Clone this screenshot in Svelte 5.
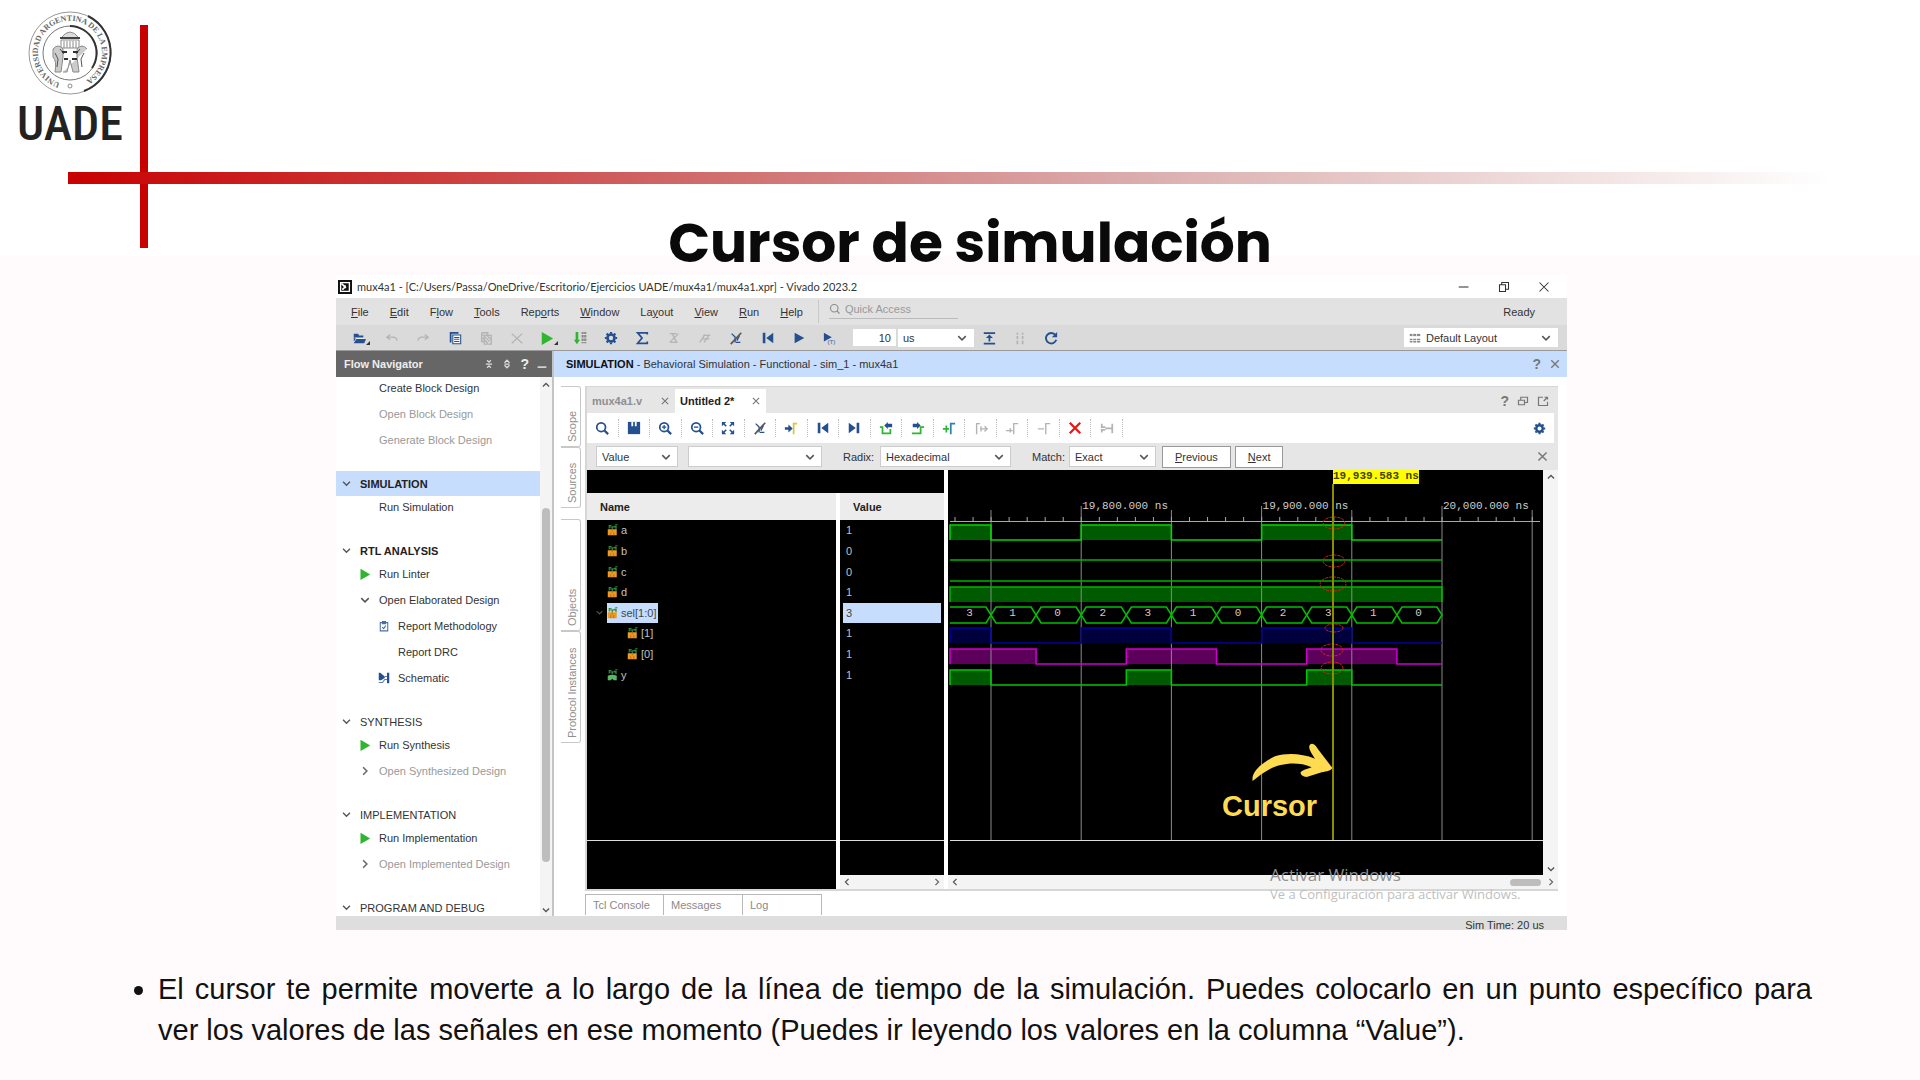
<script>
  // ── Icons, all on a 16×16 grid ────────────────────────────────────────────

  const NAVY = '#24508f';
  const GREY = '#b4b4b4';
  const GREEN = '#2fb52f';

  const line = (d, c = NAVY, w = 2) => `<path d="${d}" fill="none" stroke="${c}" stroke-width="${w}"/>`;
  const fill = (d, c = NAVY) => `<path d="${d}" fill="${c}"/>`;

  const gear =
    `<circle cx="8" cy="8" r="4" fill="none" stroke="${NAVY}" stroke-width="3"/>` +
    line('M8 1v2M8 13v2M1 8h2M13 8h2M3 3l1.500 1.500M11.500 11.500L13 13M13 3l-1.500 1.500M4.500 11.500L3 13', NAVY, 2.5);
  const lens = '<circle cx="7" cy="7" r="5" fill="none" stroke="#24508f" stroke-width="2"/>' + line('M10.500 10.500L15 15', NAVY, 2.5);

  const icons = {
    open: fill('M2 3h5l1 2h5v3H5l-3 4z') + fill('M5 9h11l-2 5H2z') + line('M3 8h11', '#fff', 1),
    undo: line('M2 7h7q4 0 5 4M6 4L2 7l4 3', GREY, 1.5),
    redo: line('M14 7H7q-4 0-5 4M10 4l4 3-4 3', GREY, 1.5),
    copy: line('M3 13V2h9', NAVY, 2) + '<path d="M5.500 4.500h9v10h-9z" fill="#fff"/>' + line('M5.500 4.500h9v10h-9zM7 7.500h6M7 9.500h6M7 12h6', NAVY, 1.2),
    paste: line('M3 2h7v4M3 2v10h3M6 5h8v10H6zM4 4l8 8M4 8l6 6M8 4l6 6', GREY, 1.5),
    cut: line('M2 3l12 11M14 3L2 14', GREY, 1.5),
    run: fill('M2 1l13 7.500L2 16z', GREEN),
    program: fill('M3 1h3v9h2l-3.500 5L1 10h2z', GREEN) + line('M11 1v13M14 1v13', '#8a8a8a', 2.5) + line('M9 4h7M9 8h7M9 12h7', '#e2e2e2', 1),
    gear,
    sum: line('M14 4V2H3l5 6-5 6h11v-2', NAVY, 2),
    dimA: line('M3 3h8M4 13h8M3 13L13 3M6 3l5 10', GREY, 1.5),
    dimB: line('M2 13L8 4M7 13l6-9M4 9h9M6 5h8', GREY, 1.5),
    slash: line('M3 3l4 4v6M13 13H8M12 5l-3 6', NAVY, 1.5) + line('M2 15L14 2', '#5a5a5a', 2),
    first: fill('M2 2h3v12H2z') + fill('M14 2v12L6 8z'),
    last: fill('M11 2h3v12h-3z') + fill('M2 2v12l8-6z'),
    play: fill('M3 2l11 6-11 6z'),
    playT: fill('M1 2l9 5-9 5z') + '<text x="5" y="15" font-size="7" font-weight="700" fill="#6d86b0">(T)</text>',
    restart: line('M2 2.500h13M2 14.500h13', NAVY, 2) + fill('M8.500 4l4 4h-8z') + fill('M7.500 7h2v5h-2z'),
    pauseDim: line('M5 2v13M11 2v13', GREY, 2) + line('M3 5h10M3 10h10', '#dadada', 1.5),
    relaunch: line('M13 4.500A6 6 0 1 0 14 10', NAVY, 2.2) + fill('M15 1v6H9z'),
    search: lens,
    quick: '<circle cx="7" cy="7" r="5" fill="none" stroke="#8a8a8a" stroke-width="1.500"/>' + line('M10.500 10.500L14 14', '#8a8a8a', 1.5),
    save: fill('M1 1h14v14H1z') + fill('M5 1h2v5H5zM9 1h2v5H9z', '#fff'),
    zoomIn: lens + line('M4.500 7h5M7 4.500v5', NAVY, 1.5),
    zoomOut: lens + line('M4.500 7h5', NAVY, 1.5),
    fit: line('M6 6L2 2M10 6l4-4M6 10l-4 4M10 10l4 4', NAVY, 1.8) + fill('M1 1h5L1 6zM15 1h-5l5 5zM1 15h5l-5-5zM15 15h-5l5-5z'),
    toCursor: fill('M1 7h4V4l5 4.500L5 13v-3H1z') + line('M11 15V3h4', '#e2c23c', 2),
    prevEdge: line('M1 7h3v7h9V9', GREEN, 2) + fill('M6 5l4-4v2h5v4h-5v2z'),
    nextEdge: line('M1 14h10V7h4', GREEN, 2) + fill('M11 5L7 1v2H2v4h5v2z'),
    addMarker: line('M1 9h7M5 5v8', GREEN, 2) + line('M10 15V3h5', '#2f7fae', 2),
    swapDim: line('M7 3H3v12M7 9h8M12 6l3 3-3 3M8 6v6', GREY, 1.6),
    prevDim: line('M1 11h8M6 8v5M10 15V3h5', GREY, 1.6),
    removeDim: line('M1 9h7M10 15V3h5', GREY, 1.6),
    remove: line('M2 2l12 12M14 2L2 14', '#ee1111', 2.5),
    fitDim: line('M2 3v4h4M2 13v-3h4M14 3v11M6 8.500h8', GREY, 2),
    layout: line('M1 4h14', '#8a8a8a', 3) + line('M1 10h14M1 13h14', '#8a8a8a', 2) + line('M5 1v15M10 1v15', '#fff', 1),
    down: line('M3 5.500l5 5 5-5', '#555', 2),
    right: line('M5.500 3l5 5-5 5', '#666', 2),
    left: line('M10.500 3l-5 5 5 5', '#555', 2),
    up: line('M3 10.500l5-5 5 5', '#555', 2),
    close: line('M3 3l10 10M13 3L3 13', '#777', 1.8),
    dash: line('M1 8h13', '#333', 1.4),
    restore: line('M2 5h8v9H2zM5 5V2h9v9h-4', '#333', 1.4),
    quit: line('M2 2l12 12M14 2L2 14', '#333', 1.4),
    float: line('M2 7h8v6H2zM5 7V3h9v7h-4', '#777', 1.6),
    maximize: line('M8 3H2v11h12V9M9 8l5-5M10 3h4v3', '#777', 1.6),
    collapse: line('M3 8h10M5 2l3 3 3-3M5 14l3-3 3 3', '#ddd', 2),
    expand: line('M4 6l4-4 4 4M4 10l4 4 4-4M4 8h8', '#ddd', 2),
    minimize: line('M1 13h14', '#ddd', 2.5),
    clipboard: line('M3 3.500h10v11H3zM6 2h4v3H6zM5.500 9.500l2 2 3-4', '#4a6fa5', 1.4),
    schematic: fill('M1 1h2l6 5v2l-5 3H1z') + fill('M12 1h3v14h-3z') + line('M1 14h5l3-4h3M9 6h3', '#5d7db0', 1.5),
    logo: '<rect width="16" height="16" fill="#111"/>' + line('M3 3h10v10H3z', '#fff', 1.5) + line('M4 4l5 5M5 11l3-3v-2', '#fff', 2),
    busIn: line('M3 6V2h3M7 7V3M9 3h3v4M11 1h3M4 4h9', '#2e8b3d', 1.6) + fill('M1 7h12v8H1z', '#ee9a22') + line('M5 11v4M9 11v4M7 7v3', '#a8670f', 1),
    busOut: line('M3 6V2h3M7 7V3M9 3h3v4M11 1h3M4 4h9', '#2e8b3d', 1.6) + fill('M1 9q6-3 12 0v6H9l-2-2-2 2H1z', '#5bb768')
  };

  // ── Window chrome ─────────────────────────────────────────────────────────

  const menus = [
    ['', 'F', 'ile'], ['', 'E', 'dit'], ['F', 'l', 'ow'], ['', 'T', 'ools'], ['Rep', 'o', 'rts'],
    ['', 'W', 'indow'], ['La', 'y', 'out'], ['', 'V', 'iew'], ['', 'R', 'un'], ['', 'H', 'elp']
  ];

  const mainTools = ['open', 'undo', 'redo', 'copy', 'paste', 'cut', 'run', 'program', 'gear', 'sum',
    'dimA', 'dimB', 'slash', 'first', 'play', 'playT'];

  const waveTools = ['search', 'save', 'zoomIn', 'zoomOut', 'fit', 'slash', 'toCursor', 'first', 'last',
    'prevEdge', 'nextEdge', 'addMarker', 'swapDim', 'prevDim', 'removeDim', 'remove', 'fitDim'];

  const flow = [
    { items: [
      { label: 'Create Block Design' },
      { label: 'Open Block Design', dim: true },
      { label: 'Generate Block Design', dim: true }
    ] },
    { title: 'SIMULATION', bold: true, active: true, items: [{ label: 'Run Simulation' }] },
    { title: 'RTL ANALYSIS', bold: true, items: [
      { label: 'Run Linter', icon: 'run' },
      { label: 'Open Elaborated Design', icon: 'down' },
      { label: 'Report Methodology', icon: 'clipboard', nested: true },
      { label: 'Report DRC', nested: true },
      { label: 'Schematic', icon: 'schematic', nested: true }
    ] },
    { title: 'SYNTHESIS', items: [
      { label: 'Run Synthesis', icon: 'run' },
      { label: 'Open Synthesized Design', icon: 'right', dim: true }
    ] },
    { title: 'IMPLEMENTATION', items: [
      { label: 'Run Implementation', icon: 'run' },
      { label: 'Open Implemented Design', icon: 'right', dim: true }
    ] },
    { title: 'PROGRAM AND DEBUG', items: [] }
  ];

  const sideTabs = [
    { label: 'Scope', size: 'short' },
    { label: 'Sources', size: 'short' },
    { label: 'Objects', size: 'long', apart: true },
    { label: 'Protocol Instances', size: 'long' }
  ];

  const signals = [
    { name: 'a', value: '1' },
    { name: 'b', value: '0' },
    { name: 'c', value: '0' },
    { name: 'd', value: '1' },
    { name: 'sel[1:0]', value: '3', selected: true },
    { name: '[1]', value: '1', nested: true },
    { name: '[0]', value: '1', nested: true },
    { name: 'y', value: '1', out: true }
  ];

  // ── Waveform ──────────────────────────────────────────────────────────────

  // One step is 25 ns; step 0 sits on the first grid line.
  const START = 2;
  const at = (n) => Math.max(START, 43 + n * 45.1);
  const END = at(10);

  const gridLines = [0, 2, 4, 6, 8, 10, 12];
  const ticks = Array.from({ length: 33 }, (_, i) => 7 + i * 18.04);
  const rulerLabels = [
    { n: 2, text: '19,800.000 ns' },
    { n: 6, text: '19,900.000 ns' },
    { n: 10, text: '20,000.000 ns' }
  ];

  const waves = [
    { top: 55, low: 70, color: '#00d800', shade: '#005a00', high: [[-1, 0], [2, 4], [6, 8]] },
    { top: 75, low: 90, color: '#00b400', shade: '#005a00', high: [] },
    { top: 96, low: 111, color: '#00b400', shade: '#005a00', high: [] },
    { top: 117, low: 132, color: '#00b400', shade: '#005a00', high: [[-1, 10]] },
    { top: 158, low: 173, color: '#0000a0', shade: '#00003c', high: [[-1, 0], [2, 4], [6, 8]] },
    { top: 179, low: 194, color: '#d000d0', shade: '#5c005c', high: [[-1, 1], [3, 5], [7, 9]] },
    { top: 200, low: 215, color: '#00c800', shade: '#005a00', high: [[-1, 0], [3, 4], [7, 8]] }
  ];

  function trace(w) {
    let d = `M${START} ${w.low}`;
    for (const [from, to] of w.high) {
      d += `H${at(from)}V${w.top}H${at(to)}V${w.low}`;
    }
    return d + `H${END}`;
  }

  const bus = ['3', '1', '0', '2', '3', '1', '0', '2', '3', '1', '0'].map((value, i) => ({
    value,
    from: at(i - 1),
    to: at(i)
  }));

  function cell({ from, to }) {
    const left = from === START ? `M${from} 137` : `M${from} 145L${from + 5} 137`;
    const back = from === START ? `H${from}` : `H${from + 5}L${from} 145`;
    return `${left}H${to - 5}L${to} 145L${to - 5} 153${back}`;
  }

  const CURSOR = 385;
  const rings = [
    [386, 53, 11, 6], [386, 91, 11, 6], [385, 114, 13, 7],
    [386, 158, 9, 4], [384, 180, 11, 6], [384, 198, 11, 6]
  ];
</script>

{#snippet icon(name, size = 14)}
  <svg class="icon" width={size} height={size} viewBox="0 0 16 16" aria-hidden="true">{@html icons[name]}</svg>
{/snippet}

{#snippet pick(label, value, kind)}
  <span class="pick {kind}">
    <select aria-label={label}><option>{value}</option></select>
    <span class="pick-arrow">{@render icon('down', 12)}</span>
  </span>
{/snippet}

<header class="banner">
  <div class="brand">
    <svg width="92" height="92" viewBox="0 0 92 92" role="img" aria-label="Sello UADE">
      <defs>
        <path id="seal-ring" d="M36 76A32 32 0 1 1 56 76" />
      </defs>
      <circle cx="46" cy="46" r="41" fill="none" stroke="#999" stroke-width="1" />
      <path d="M64 9A41 41 0 0 1 60 84" fill="none" stroke="#333" stroke-width="2" />
      <circle cx="46" cy="46" r="27" fill="none" stroke="#777" stroke-width="1" />
      <path d="M46 19A27 27 0 0 1 68 61" fill="none" stroke="#333" stroke-width="2" />
      <text class="seal-text"><textPath href="#seal-ring">UNIVERSIDAD ARGENTINA DE LA EMPRESA</textPath></text>
      <g fill="none" stroke="#8a8a8a" stroke-width="1">
        <path d="M37 31q9-12 18 0z" fill="#ddd" />
        <path d="M36 31h20" stroke="#444" stroke-width="2" />
        <path d="M37 33h18v8H37zM40 34v7M43 34v7M46 34v7M49 34v7M52 34v7" />
        <path d="M29 42q5-6 10 0v8l-2 15h-6q2-11-2-15z" fill="#ccc" />
        <path d="M63 42q-5-6-10 0v8l2 15h-6l-3-12-3 12h-4" fill="#ccc" />
        <path d="M31 46l3 6-1 8M60 46l-3 6 1 8M36 42l4 5M56 42l-4 5" stroke="#555" />
        <path d="M38 45h5M49 45h5M40 52h4M48 52h5" stroke="#333" stroke-width="2" />
        <circle cx="46" cy="79" r="2" />
      </g>
    </svg>
    <span class="brand-name">UADE</span>
  </div>
  <div class="rule-v"></div>
  <div class="rule-h"></div>
  <h1>Cursor de simulación</h1>
</header>

<main>
  <section class="app-window">
    <div class="titlebar">
      {@render icon('logo')}
      <span class="title">mux4a1 - [C:/Users/Passa/OneDrive/Escritorio/Ejercicios UADE/mux4a1/mux4a1.xpr] - Vivado 2023.2</span>
      <div class="window-buttons">
        <button aria-label="Minimizar">{@render icon('dash', 12)}</button>
        <button aria-label="Restaurar">{@render icon('restore', 12)}</button>
        <button aria-label="Cerrar">{@render icon('quit', 12)}</button>
      </div>
    </div>

    <nav class="menubar">
      {#each menus as [before, key, after]}
        <button>{before}<u>{key}</u>{after}</button>
      {/each}
      <div class="quick-box">
        <label class="quick">
          {@render icon('quick', 12)}
          <input type="text" placeholder="Quick Access" />
        </label>
      </div>
      <span class="ready">Ready</span>
    </nav>

    <div class="toolbar">
      <div class="main-tools">
        {#each mainTools as name}
          <button aria-label={name} class:corner={name === 'open' || name === 'run'}>{@render icon(name)}</button>
        {/each}
      </div>
      <input class="run-time" type="text" value="10" aria-label="Run time" />
      {@render pick('Time unit', 'us', 'unit')}
      <div class="run-tools">
        <button aria-label="Restart">{@render icon('restart')}</button>
        <button aria-label="Break">{@render icon('pauseDim')}</button>
        <button aria-label="Relaunch">{@render icon('relaunch')}</button>
      </div>
      <div class="layout-pick">
        {@render icon('layout', 12)}
        {@render pick('Layout', 'Default Layout', 'layout')}
      </div>
    </div>

    <div class="body">
      <aside class="navigator">
        <div class="nav-head">
          <span>Flow Navigator</span>
          {@render icon('collapse', 10)}
          {@render icon('expand', 10)}
          <b>?</b>
          {@render icon('minimize', 10)}
        </div>
        <div class="nav-body">
          <div class="nav-list">
            {#each flow as group}
              <div class="group">
                {#if group.title}
                  <div class="group-title" class:bold={group.bold} class:active={group.active}>
                    {@render icon('down', 11)}{group.title}
                  </div>
                {/if}
                <ul>
                  {#each group.items as item}
                    <li class:dim={item.dim} class:nested={item.nested}>
                      <span class="slot">{#if item.icon}{@render icon(item.icon, 12)}{/if}</span>{item.label}
                    </li>
                  {/each}
                </ul>
              </div>
            {/each}
          </div>
          <div class="vscroll">
            {@render icon('up', 10)}
            <span class="nav-thumb"></span>
            {@render icon('down', 10)}
          </div>
        </div>
      </aside>

      <section class="simulation">
        <div class="sim-head">
          <span><b>SIMULATION</b> - Behavioral Simulation - Functional - sim_1 - mux4a1</span>
          <span class="head-icons"><b>?</b>{@render icon('close', 12)}</span>
        </div>

        <div class="sim-body">
          <div class="side-tabs">
            {#each sideTabs as tab}
              <button class={tab.size} class:apart={tab.apart}>{tab.label}</button>
            {/each}
          </div>

          <div class="work">
            <div class="panel">
              <div class="tabs">
                <button class="tab">mux4a1.v {@render icon('close', 10)}</button>
                <button class="tab current">Untitled 2* {@render icon('close', 10)}</button>
                <span class="tab-icons"><b>?</b>{@render icon('float', 12)}{@render icon('maximize', 12)}</span>
              </div>

              <div class="wave-bar">
                <div class="wave-tools">
                  {#each waveTools as name}
                    <button aria-label={name}>{@render icon(name)}</button>
                  {/each}
                </div>
                <button class="settings" aria-label="Settings">{@render icon('gear', 13)}</button>
              </div>

              <div class="find">
                {@render pick('Find by', 'Value', 'by')}
                {@render pick('Find text', '', 'text')}
                <span class="find-label radix">Radix:</span>
                {@render pick('Radix', 'Hexadecimal', 'base')}
                <span class="find-label match">Match:</span>
                {@render pick('Match', 'Exact', 'exact')}
                <button class="push"><u>P</u>revious</button>
                <button class="push"><u>N</u>ext</button>
                <button class="find-close" aria-label="Close">{@render icon('close', 13)}</button>
              </div>

              <div class="content">
                <div class="signals">
                  <div class="signals-top"></div>
                  <table>
                    <thead>
                      <tr><th class="name">Name</th><th>Value</th></tr>
                    </thead>
                    <tbody>
                      {#each signals as s}
                        <tr class:selected={s.selected}>
                          <td class="name" class:nested={s.nested}>
                            <div class="signal">
                              <span class="twist">{#if s.selected}{@render icon('down', 9)}{/if}</span>
                              <span class="tag">{@render icon(s.out ? 'busOut' : 'busIn', 12)}{s.name}</span>
                            </div>
                          </td>
                          <td class="value"><span>{s.value}</span></td>
                        </tr>
                      {/each}
                    </tbody>
                  </table>
                  <div class="below">
                    <div class="below-name"><div class="fill"></div></div>
                    <div class="below-value">
                      <div class="fill"></div>
                      <div class="hscroll">{@render icon('left', 10)}{@render icon('right', 10)}</div>
                    </div>
                  </div>
                </div>

                <div class="wave">
                  <div class="wave-main">
                    <svg class="canvas" height="405">
                      {#each waves as w}
                        {#each w.high as [from, to]}
                          <rect x={at(from)} y={w.top} width={at(to) - at(from)} height={w.low - w.top} fill={w.shade} />
                        {/each}
                      {/each}
                      {#each gridLines as n}
                        <path class="grid" d="M{at(n)} {n % 4 === 2 ? 36 : 40}V370" />
                      {/each}
                      <path class="ruler" d="M2 51.500H592" />
                      {#each ticks as x}
                        <path class="ruler" d="M{x} 47V51" />
                      {/each}
                      {#each rulerLabels as l}
                        <text class="mono" x={at(l.n) + 1} y="39">{l.text}</text>
                      {/each}
                      {#each waves as w}
                        <path d={trace(w)} fill="none" stroke={w.color} stroke-width="1.500" />
                      {/each}
                      {#each bus as b}
                        <path d={cell(b)} fill="none" stroke="#00c000" stroke-width="1.500" />
                        <text class="mono" x={(b.from + b.to) / 2 - 1} y="146" text-anchor="middle">{b.value}</text>
                      {/each}
                      {#each rings as [cx, cy, rx, ry]}
                        <ellipse class="ring" {cx} {cy} {rx} {ry} />
                      {/each}
                      <path class="cursor" d="M{CURSOR} 14V370" />
                      <rect x={CURSOR} y="0" width="86" height="14" fill="#ff0" />
                      <text class="mono stamp" x={CURSOR} y="9">19,939.583 ns</text>
                      <rect x="2" y="370" width="100%" height="1" fill="#ddd" />
                      <path
                        class="arrow"
                        transform="translate(232 230) scale(.3333)"
                        d="M218 243C212 215 250 185 285 169C320 158 365 160 405 176C395 160 386 148 388 138C391 128 402 130 408 139C420 156 440 182 457 203C455 212 440 213 425 217L380 231C368 230 361 224 362 217C370 208 385 207 395 202C350 182 300 192 270 207C250 217 235 230 218 243Z"
                      />
                      <text class="callout" x="274" y="346">Cursor</text>
                    </svg>
                    <div class="hscroll">{@render icon('left', 10)}<span class="wave-thumb"></span></div>
                  </div>
                  <div class="wave-scroll">
                    {@render icon('up', 10)}
                    <span class="corner-arrows">{@render icon('down', 10)}{@render icon('right', 10)}</span>
                  </div>
                </div>
              </div>
            </div>

            <div class="bottom-tabs">
              <button>Tcl Console</button>
              <button>Messages</button>
              <button>Log</button>
            </div>
          </div>
        </div>
      </section>
    </div>

    <footer class="status">Sim Time: 20 us</footer>

    <div class="watermark">
      <p class="activate">Activar Windows</p>
      <p>Ve a Configuración para activar Windows.</p>
    </div>
  </section>

  <ul class="notes">
    <li>El cursor te permite moverte a lo largo de la línea de tiempo de la simulación. Puedes colocarlo en un punto específico para ver&nbsp;los valores de las señales en ese momento (Puedes ir leyendo los valores en la columna “Value”).</li>
  </ul>
</main>

<style>
  :global(body) {
    margin: 0;
    background: linear-gradient(#fff, #fff) no-repeat top / 100% 256px #fffbfc;
    font-family: "Liberation Sans", Arial, sans-serif;
  }

  button, input, select {
    font: inherit;
    color: inherit;
    background: none;
    border: none;
    padding: 0;
    margin: 0;
    box-sizing: border-box;
  }

  .icon {
    display: block;
    flex-shrink: 0;
  }

  /* ── Banner ──────────────────────────────────────────────────────── */

  .banner {
    display: grid;
    grid-template-columns: 68px 72px 8px 1fr 90px;
    grid-template-rows: 25px 147px 12px 64px 27px;
  }

  .brand {
    grid-area: 1 / 1 / 3 / 3;
    display: flex;
    flex-direction: column;
    align-items: center;
    padding-top: 7px;
  }

  .brand-name {
    font: 500 48px/50px "Roboto Condensed", "Open Sans Condensed", "DejaVu Sans Condensed", sans-serif;
    color: #222;
  }

  .seal-text {
    font: 700 8px "Liberation Serif", serif;
    fill: #666;
  }

  .rule-v {
    grid-area: 2 / 3 / 5 / 4;
    background: #c80000;
  }

  .rule-h {
    grid-area: 3 / 2 / 4 / 5;
    background: linear-gradient(90deg, #c80000, #cd3a3a 20%, #d06c6c 36%, #dcb0b0 62%, #fff);
  }

  h1 {
    grid-area: 4 / 1 / 6 / -1;
    align-self: end;
    margin: 0;
    padding-left: 20px;
    text-align: center;
    font: 700 55px/64px Poppins, Inter, sans-serif;
    color: #0a0a0a;
  }

  /* ── Application window ──────────────────────────────────────────── */

  .app-window {
    position: relative;
    margin: 0 353px 0 336px;
    background: #fff;
    font-size: 11px;
    line-height: 14px;
    color: #333;
    white-space: nowrap;
  }

  .titlebar {
    display: flex;
    align-items: center;
    gap: 5px;
    height: 23px;
    padding: 0 17px 0 2px;
  }

  .title {
    font-family: Lato, "Noto Sans", sans-serif;
  }

  .window-buttons {
    display: flex;
    gap: 28px;
    margin-left: auto;
  }

  .menubar {
    display: flex;
    align-items: center;
    gap: 21px;
    height: 27px;
    padding: 0 32px 0 15px;
    background: #e2e2e2;
  }

  .quick-box {
    padding: 0 0 4px 10px;
    margin-left: -6px;
    border-left: 1px solid #c8c8c8;
  }

  .quick {
    display: flex;
    align-items: center;
    gap: 4px;
    width: 129px;
    height: 18px;
    border-bottom: 1px solid #bbb;
    color: #999;
  }

  .quick input {
    flex: 1;
    min-width: 0;
  }

  .quick input::placeholder {
    color: #999;
  }

  .ready {
    margin-left: auto;
  }

  .toolbar {
    display: flex;
    align-items: center;
    height: 26px;
    padding: 0 9px;
    background: #dadada;
    border-bottom: 1px solid #999;
    box-sizing: border-box;
  }

  .main-tools {
    display: grid;
    grid-template-columns: repeat(16, 1fr);
    width: 501px;
    margin-right: 7px;
  }

  .main-tools button,
  .wave-tools button {
    display: flex;
    justify-content: center;
    align-items: center;
  }

  .main-tools .corner::after {
    content: '';
    align-self: end;
    width: 0;
    border: 2px solid transparent;
    border-right-color: #333;
    border-bottom-color: #333;
  }

  .run-time {
    width: 43px;
    height: 17px;
    padding-right: 5px;
    text-align: right;
    background: #fff;
  }

  .run-tools {
    display: flex;
    gap: 17px;
    margin-left: 8px;
  }

  .layout-pick {
    display: flex;
    align-items: center;
    height: 19px;
    margin-left: auto;
    padding-left: 5px;
    background: #fff;
  }

  .pick {
    position: relative;
    display: inline-flex;
  }

  .pick select {
    appearance: none;
    width: 100%;
    height: 21px;
    padding-left: 5px;
    background: #fff;
    border: 1px solid #ccc;
  }

  .pick-arrow {
    position: absolute;
    right: 6px;
    top: 5px;
    pointer-events: none;
  }

  .unit { width: 76px; margin-left: 2px; }
  .layout { width: 137px; }
  .by { width: 82px; }
  .text { width: 134px; margin-left: 10px; }
  .base { width: 131px; }
  .exact { width: 87px; margin-right: 6px; }

  .unit select,
  .layout select {
    height: 18px;
    border: none;
  }

  .unit .pick-arrow,
  .layout .pick-arrow {
    top: 3px;
  }

  /* ── Flow navigator ──────────────────────────────────────────────── */

  .body {
    display: flex;
    height: 565px;
  }

  .navigator {
    display: flex;
    flex-direction: column;
    width: 216px;
    border-right: 2px solid #c4c4c4;
  }

  .nav-head {
    display: flex;
    align-items: center;
    gap: 8px;
    height: 26px;
    padding: 0 5px 0 8px;
    background: #666;
    color: #eee;
    font-weight: 700;
  }

  .nav-head span {
    margin-right: auto;
  }

  .nav-head b {
    font-size: 14px;
  }

  .nav-body {
    display: flex;
    flex: 1;
    min-height: 0;
  }

  .nav-list {
    flex: 1;
    overflow: hidden;
  }

  .group {
    margin-bottom: 19px;
  }

  .group-title {
    display: flex;
    align-items: center;
    gap: 8px;
    height: 25px;
    padding-left: 5px;
  }

  .group-title.bold {
    font-weight: 700;
    color: #222;
  }

  .group-title.active {
    background: #c6ddfd;
  }

  .group ul {
    display: flex;
    flex-direction: column;
    gap: 3px;
    list-style: none;
    margin: 0;
    padding: 0;
  }

  .group li {
    display: flex;
    align-items: center;
    gap: 8px;
    height: 23px;
    padding: 0 0 1px 23px;
    box-sizing: border-box;
  }

  .group li.nested {
    padding-left: 42px;
  }

  .group li.dim {
    color: #999;
  }

  .slot {
    width: 12px;
  }

  .vscroll {
    display: flex;
    flex-direction: column;
    align-items: center;
    width: 12px;
    padding: 3px 0 1px;
    background: #f4f4f4;
    box-sizing: border-box;
  }

  .nav-thumb {
    width: 8px;
    height: 354px;
    margin: 118px 0 auto;
    border-radius: 4px;
    background: #bdbdbd;
  }

  /* ── Simulation area ─────────────────────────────────────────────── */

  .simulation {
    flex: 1;
    min-width: 0;
    display: flex;
    flex-direction: column;
  }

  .sim-head {
    display: flex;
    justify-content: space-between;
    align-items: center;
    height: 26px;
    padding: 0 6px 0 12px;
    background: #c6ddfd;
  }

  .sim-head > span:first-child b {
    color: #111;
  }

  .head-icons,
  .tab-icons {
    display: flex;
    align-items: center;
    gap: 8px;
    color: #777;
  }

  .head-icons b,
  .tab-icons b {
    font-size: 14px;
  }

  .sim-body {
    display: flex;
    flex: 1;
    padding: 9px 9px 0 7px;
  }

  .side-tabs {
    display: flex;
    flex-direction: column;
    width: 20px;
    margin-right: 4px;
  }

  .side-tabs button {
    writing-mode: vertical-rl;
    transform: rotate(180deg);
    width: 20px;
    padding: 4px 3px 4px 0;
    text-align: left;
    color: #8f8f8f;
    border: 1px solid #c8c8c8;
    border-right: none;
    border-radius: 3px 0 0 3px;
  }

  .side-tabs .short { height: 61px; }
  .side-tabs .long { height: 112px; }
  .side-tabs .apart { margin-top: 11px; }

  .work {
    flex: 1;
    min-width: 0;
  }

  .panel {
    border: solid #d6d6d6;
    border-width: 1px 0 2px 2px;
    background: #e6e6e6;
  }

  .tabs {
    display: flex;
    height: 26px;
    padding: 2px 9px 0 0;
    box-sizing: border-box;
  }

  .tab {
    display: flex;
    justify-content: space-between;
    align-items: center;
    width: 88px;
    padding: 0 5px;
    color: #8f8f8f;
    font-weight: 700;
  }

  .tab.current {
    width: 91px;
    background: #fff;
    color: #222;
  }

  .tab-icons {
    margin-left: auto;
  }

  .wave-bar {
    display: flex;
    align-items: center;
    justify-content: space-between;
    height: 30px;
    margin-right: 4px;
    padding-right: 8px;
    background: #fff;
  }

  .wave-tools {
    display: grid;
    grid-template-columns: repeat(17, 1fr);
    width: 536px;
  }

  .wave-tools button {
    height: 18px;
    border-right: 1px dotted #bbb;
  }

  .find {
    display: flex;
    align-items: center;
    height: 27px;
    padding: 0 9px;
  }

  .find-label {
    width: 37px;
    margin-left: 21px;
  }

  .push {
    height: 22px;
    margin-right: 4px;
    padding: 0 12px;
    background: #fff;
    border: 1px solid #999;
  }

  .find-close {
    margin-left: auto;
  }

  .content {
    display: flex;
    height: 419px;
  }

  .signals {
    width: 357px;
    flex-shrink: 0;
  }

  .signals-top {
    height: 23px;
    background: #000;
  }

  table {
    width: 100%;
    height: 192px;
    table-layout: fixed;
    border-collapse: collapse;
  }

  th {
    height: 27px;
    padding: 0 0 0 13px;
    background: #ececec;
    text-align: left;
    color: #222;
  }

  th.name {
    width: 236px;
  }

  td {
    padding: 0;
    background: #000;
    color: #c0c0c0;
  }

  .name {
    border-right: 4px solid #fff;
  }

  .signal {
    display: flex;
    align-items: center;
    padding-left: 8px;
  }

  .nested .signal {
    padding-left: 28px;
  }

  .twist {
    width: 12px;
  }

  .tag {
    display: flex;
    align-items: center;
    gap: 2px;
    height: 20px;
    padding-right: 2px;
  }

  .value span {
    display: block;
    height: 20px;
    margin: 0 3px 0 3px;
    padding-left: 3px;
    line-height: 20px;
  }

  .selected .tag,
  .selected .value span {
    background: #c6ddfd;
    color: #444;
  }

  .below {
    display: grid;
    grid-template-columns: 249px 1fr;
    height: 204px;
  }

  .below-name {
    background: #000;
    border-right: 4px solid #fff;
    box-sizing: content-box;
    width: 249px;
  }

  .below-value {
    display: flex;
    flex-direction: column;
    margin-left: 4px;
    background: #000;
  }

  .fill {
    height: 155px;
    border-bottom: 1px solid #ddd;
  }

  .hscroll {
    display: flex;
    justify-content: space-between;
    align-items: center;
    height: 14px;
    margin-top: auto;
    padding: 0 2px;
    background: #f4f4f4;
  }

  .wave {
    display: flex;
    flex: 1;
    min-width: 0;
    border-left: 4px solid #fff;
  }

  .wave-main {
    display: flex;
    flex-direction: column;
    flex: 1;
    min-width: 0;
  }

  .canvas {
    display: block;
    width: 100%;
    background: #000;
  }

  .grid {
    stroke: #8a8a8a;
    stroke-width: 1;
  }

  .ruler {
    stroke: #aaa;
    stroke-width: 1;
  }

  .mono {
    font: 11px "Liberation Mono", monospace;
    fill: #ccc;
  }

  .mono.stamp {
    font-weight: 700;
    fill: #444400;
  }

  .ring {
    fill: none;
    stroke: #c02818;
    stroke-width: 1;
    stroke-dasharray: 3 1;
  }

  .cursor {
    stroke: #8c8c00;
    stroke-width: 2;
  }

  .arrow,
  .callout {
    fill: #ffdb52;
  }

  .callout {
    font: 700 29px "Liberation Sans", sans-serif;
  }

  .wave-thumb {
    width: 31px;
    height: 7px;
    border-radius: 4px;
    background: #bdbdbd;
  }

  .wave-scroll {
    display: flex;
    flex-direction: column;
    justify-content: space-between;
    align-items: center;
    width: 15px;
    padding: 2px 0;
    background: #f4f4f4;
    box-sizing: border-box;
  }

  .corner-arrows {
    display: grid;
    gap: 3px;
  }

  .bottom-tabs {
    display: flex;
    margin-top: 3px;
  }

  .bottom-tabs button {
    width: 79px;
    height: 21px;
    padding-left: 7px;
    text-align: left;
    color: #8a8a8a;
    border: solid #b8b8b8;
    border-width: 1px 1px 0;
  }

  .bottom-tabs button + button {
    border-left: none;
  }

  .status {
    height: 14px;
    padding-right: 23px;
    line-height: 18px;
    text-align: right;
    background: #dedede;
  }

  .watermark {
    position: absolute;
    right: 49px;
    bottom: 27px;
    width: 248px;
    font: 13px/18px "Open Sans", "Noto Sans", sans-serif;
    color: #c0c0c0;
  }

  .watermark p {
    margin: 0;
  }

  .watermark .activate {
    font-size: 17px;
    line-height: 20px;
    color: #909090;
  }

  /* ── Notes ───────────────────────────────────────────────────────── */

  .notes {
    margin: 39px 108px 0 0;
    padding-left: 158px;
    font-size: 29px;
    line-height: 41px;
    text-align: justify;
    color: #111;
  }
</style>
